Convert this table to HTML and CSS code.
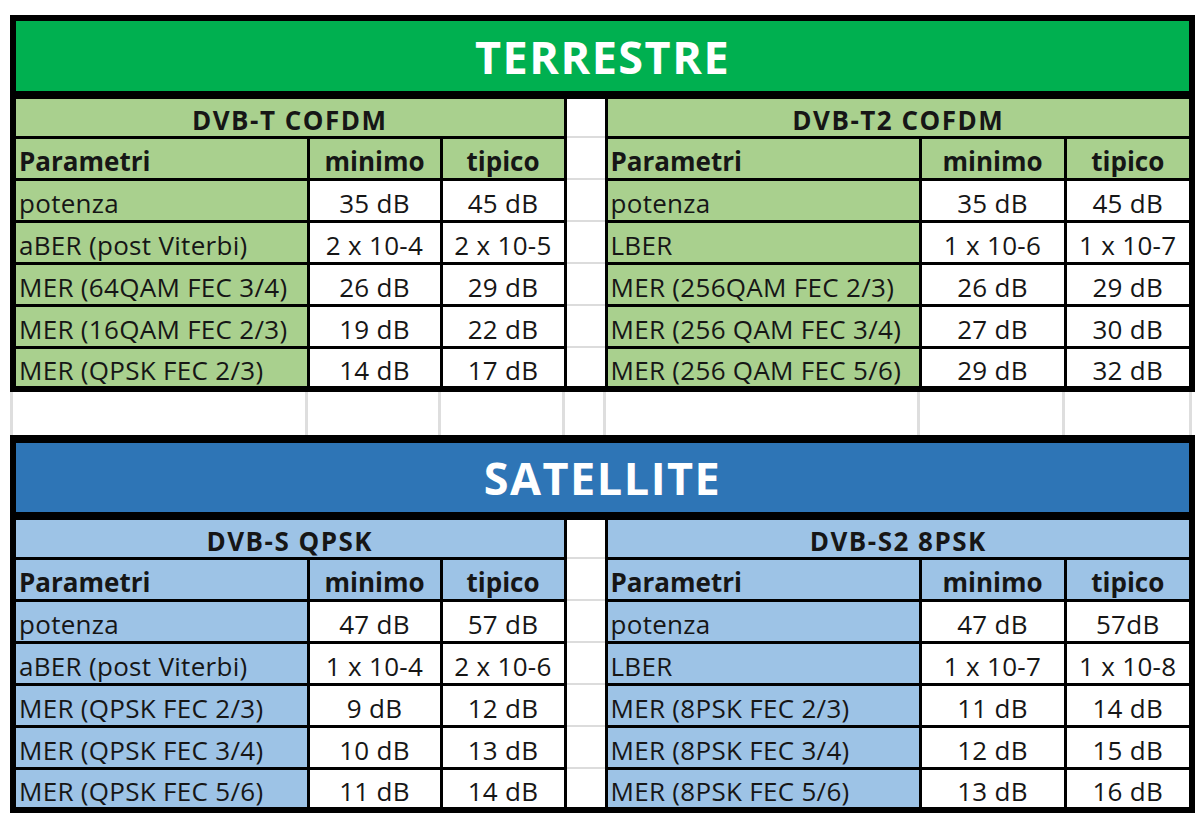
FILE: index.html
```html
<!DOCTYPE html>
<html lang="it">
<head>
<meta charset="utf-8">
<title>Parametri DVB</title>
<link rel="stylesheet" href="styles.css">
</head>
<body>
<table class="block terr">
  <colgroup>
    <col class="c1"><col class="c2"><col class="c3"><col class="cg"><col class="c5"><col class="c6"><col class="c7">
  </colgroup>
  <tr class="title-row"><th colspan="7" class="title">TERRESTRE</th></tr>
  <tr class="row">
    <th colspan="3" class="sub">DVB-T COFDM</th><td class="gap"></td><th colspan="3" class="sub">DVB-T2 COFDM</th>
  </tr>
  <tr class="row">
    <th class="ph">Parametri</th><th class="vh">minimo</th><th class="vh">tipico</th><td class="gap"></td>
    <th class="ph">Parametri</th><th class="vh">minimo</th><th class="vh">tipico</th>
  </tr>
  <tr class="row">
    <td class="p">potenza</td><td class="v">35 dB</td><td class="v">45 dB</td><td class="gap"></td>
    <td class="p">potenza</td><td class="v">35 dB</td><td class="v">45 dB</td>
  </tr>
  <tr class="row">
    <td class="p">aBER (post Viterbi)</td><td class="v">2 x 10-4</td><td class="v">2 x 10-5</td><td class="gap"></td>
    <td class="p">LBER</td><td class="v">1 x 10-6</td><td class="v">1 x 10-7</td>
  </tr>
  <tr class="row">
    <td class="p">MER (64QAM FEC 3/4)</td><td class="v">26 dB</td><td class="v">29 dB</td><td class="gap"></td>
    <td class="p">MER (256QAM FEC 2/3)</td><td class="v">26 dB</td><td class="v">29 dB</td>
  </tr>
  <tr class="row">
    <td class="p">MER (16QAM FEC 2/3)</td><td class="v">19 dB</td><td class="v">22 dB</td><td class="gap"></td>
    <td class="p">MER (256 QAM FEC 3/4)</td><td class="v">27 dB</td><td class="v">30 dB</td>
  </tr>
  <tr class="row">
    <td class="p">MER (QPSK FEC 2/3)</td><td class="v">14 dB</td><td class="v">17 dB</td><td class="gap"></td>
    <td class="p">MER (256 QAM FEC 5/6)</td><td class="v">29 dB</td><td class="v">32 dB</td>
  </tr>
</table>

<table class="spacer">
  <colgroup>
    <col class="c1"><col class="c2"><col class="c3"><col class="cg"><col class="c5"><col class="c6"><col class="c7">
  </colgroup>
  <tr><td></td><td></td><td></td><td></td><td></td><td></td><td></td></tr>
</table>

<table class="block sat">
  <colgroup>
    <col class="c1"><col class="c2"><col class="c3"><col class="cg"><col class="c5"><col class="c6"><col class="c7">
  </colgroup>
  <tr class="title-row"><th colspan="7" class="title">SATELLITE</th></tr>
  <tr class="row">
    <th colspan="3" class="sub">DVB-S QPSK</th><td class="gap"></td><th colspan="3" class="sub">DVB-S2 8PSK</th>
  </tr>
  <tr class="row">
    <th class="ph">Parametri</th><th class="vh">minimo</th><th class="vh">tipico</th><td class="gap"></td>
    <th class="ph">Parametri</th><th class="vh">minimo</th><th class="vh">tipico</th>
  </tr>
  <tr class="row">
    <td class="p">potenza</td><td class="v">47 dB</td><td class="v">57 dB</td><td class="gap"></td>
    <td class="p">potenza</td><td class="v">47 dB</td><td class="v">57dB</td>
  </tr>
  <tr class="row">
    <td class="p">aBER (post Viterbi)</td><td class="v">1 x 10-4</td><td class="v">2 x 10-6</td><td class="gap"></td>
    <td class="p">LBER</td><td class="v">1 x 10-7</td><td class="v">1 x 10-8</td>
  </tr>
  <tr class="row">
    <td class="p">MER (QPSK FEC 2/3)</td><td class="v">9 dB</td><td class="v">12 dB</td><td class="gap"></td>
    <td class="p">MER (8PSK FEC 2/3)</td><td class="v">11 dB</td><td class="v">14 dB</td>
  </tr>
  <tr class="row">
    <td class="p">MER (QPSK FEC 3/4)</td><td class="v">10 dB</td><td class="v">13 dB</td><td class="gap"></td>
    <td class="p">MER (8PSK FEC 3/4)</td><td class="v">12 dB</td><td class="v">15 dB</td>
  </tr>
  <tr class="row">
    <td class="p">MER (QPSK FEC 5/6)</td><td class="v">11 dB</td><td class="v">14 dB</td><td class="gap"></td>
    <td class="p">MER (8PSK FEC 5/6)</td><td class="v">13 dB</td><td class="v">16 dB</td>
  </tr>
</table>
</body>
</html>
```

FILE: styles.css
```css
html, body {
  margin: 0;
  padding: 0;
  background: #ffffff;
}
body {
  padding: 15px 0 0 10px;
  font-family: "Open Sans", Lato, "DejaVu Sans", sans-serif;
  color: #161616;
}
table {
  border-collapse: collapse;
  table-layout: fixed;
  width: 1179px;
}
.c1 { width: 295px; }
.c2 { width: 133px; }
.c3 { width: 124px; }
.cg { width: 41px; }
.c5 { width: 314px; }
.c6 { width: 145px; }
.c7 { width: 127px; }

.block {
  border: 6px solid #000;
}
.block th, .block td {
  border: 3px solid #000;
  padding: 5px 0 0 0;
  font-size: 26px;
  line-height: 1;
  letter-spacing: 0.3px;
  white-space: nowrap;
  overflow: hidden;
}
.title-row { height: 77px; }
.row { height: 42px; }
.block .title {
  padding: 0;
  font-size: 45px;
  font-weight: 700;
  color: #ffffff;
  text-align: center;
  border-bottom: 8px solid #000;
  letter-spacing: 1.5px;
}
.terr .title { background: #00b050; }
.sat .title { background: #2e75b6; }

.block .sub, .block .ph, .block .vh {
  font-weight: 700;
  text-align: center;
  letter-spacing: 0;
}
.block .sub { letter-spacing: 1.5px; }
.block .ph { text-align: left; padding-left: 3px; }
.terr .sub, .terr .ph, .terr .vh, .terr .p { background: #a9d08e; }
.sat .sub, .sat .ph, .sat .vh, .sat .p { background: #9dc3e6; }

.block .p {
  text-align: left;
  padding-left: 3px;
}
.block .v {
  text-align: center;
  background: #ffffff;
}
.block td.gap {
  background: #ffffff;
  border-top: 2px solid #dcdcdc;
  border-bottom: 2px solid #dcdcdc;
}

.spacer td {
  height: 43px;
  padding: 0;
  border-right: 3px solid #dedede;
}
.spacer td:first-child { border-left: 3px solid #dedede; }
.sat { border-top-width: 8px; }
```
